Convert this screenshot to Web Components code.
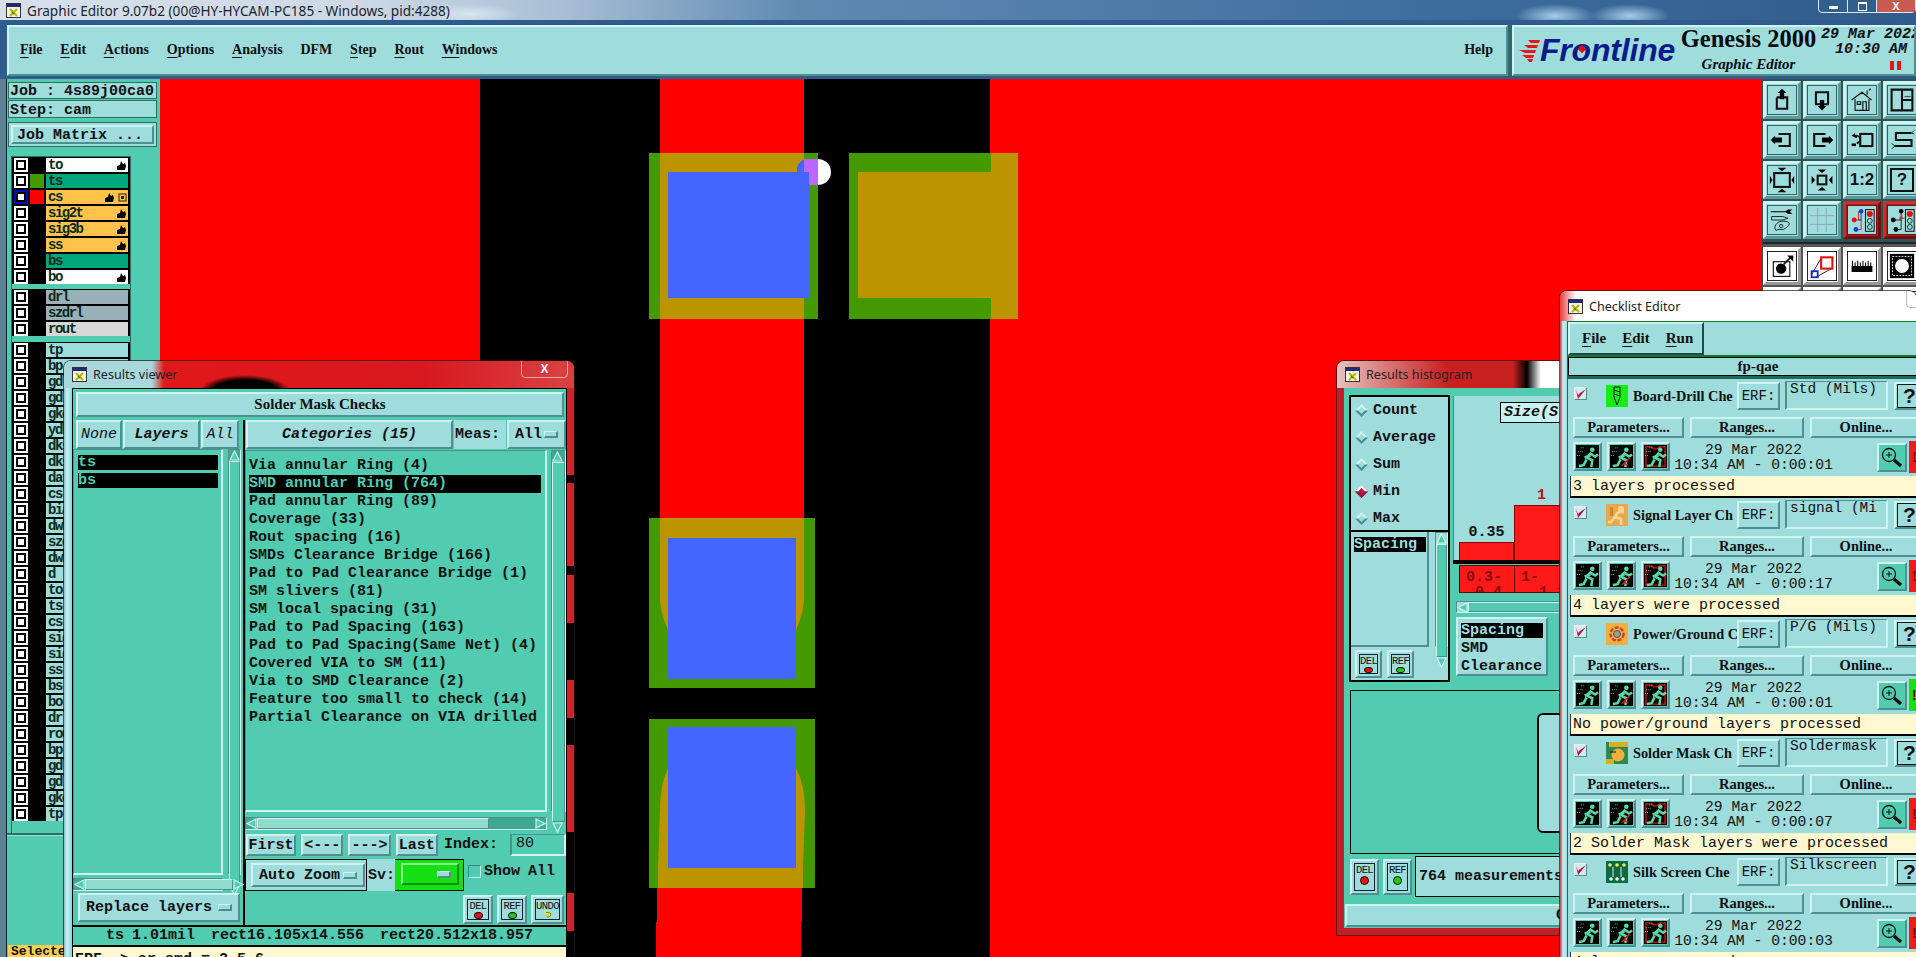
<!DOCTYPE html>
<html>
<head>
<meta charset="utf-8">
<title>Graphic Editor</title>
<style>
  html, body { margin: 0; background: #000; overflow: hidden; }
</style>
</head>
<body>
<ge-app></ge-app>
<script>
const CYAN = '#9fdcdc', TEAL = '#52ccb0';
const MONO = '"Liberation Mono", monospace', SERIF = '"Liberation Serif", serif';
const RAISED = 'border:2px solid;border-color:#cff3f3 #4f8f8f #4f8f8f #cff3f3;';
const SUNKEN = 'border:2px solid;border-color:#4f8f8f #cff3f3 #cff3f3 #4f8f8f;';

function define(name, css, render) {
  customElements.define(name, class extends HTMLElement {
    constructor() {
      super();
      this.attachShadow({ mode: 'open' });
    }
    connectedCallback() {
      if (this._done) return;
      this._done = true;
      const a = (k, d = '') => this.hasAttribute(k) ? this.getAttribute(k) : d;
      this.shadowRoot.innerHTML = `<style>${css}</style>${render(a)}`;
    }
  });
}

define('m-btn', `
  :host { display:flex; align-items:center; justify-content:center; box-sizing:border-box; background:${CYAN};
    ${RAISED} font:bold 15px ${MONO}; color:#111; white-space:nowrap; overflow:hidden; }
`, () => `<slot></slot>`);

define('m-drop', `
  :host { display:flex; align-items:center; box-sizing:border-box; background:${CYAN}; ${RAISED}
    font:bold 15px ${MONO}; color:#111; padding:0 6px 0 6px; white-space:pre; }
  span { flex:1; }
  i { width:11px; height:4px; background:${CYAN}; ${RAISED} border-width:1px 2px 2px 1px; }
`, () => `<span><slot></slot></span><i></i>`);

define('scroll-bar', `
  :host { display:flex; box-sizing:border-box; background:#3fa893; ${SUNKEN} border-width:1px; }
  :host([dir=v]) { flex-direction:column; }
  svg { flex:none; width:11px; height:11px; display:block; }
  b { display:block; background:${TEAL}; ${RAISED} border-width:1px; box-sizing:border-box; }
  :host([light]) b { background:#8fdccc; }
  u { flex:1; }
`, a => {
  const v = a('dir') === 'v';
  const s = v ? 'flex:none;height:' + a('thumb', '100%') : 'flex:none;width:' + a('thumb', '100%');
  const first = v ? 'M5.5 1L10 10H1z' : 'M1 5.5L10 1V10z';
  const last = v ? 'M5.5 10L10 1H1z' : 'M10 5.5L1 1V10z';
  const arrow = d => `<svg viewBox="0 0 11 11"><path d="${d}" fill="${TEAL}" stroke="#c8f4ec" stroke-width="1.2"/></svg>`;
  return `${arrow(first)}<b style="${s}"></b><u></u>${arrow(last)}`;
});

// small DEL / REF / UNDO button with the dot under the word
define('dot-btn', `
  :host { display:flex; box-sizing:border-box; background:${CYAN}; ${RAISED} padding:2px; }
  div { flex:1; border:1px solid #123; display:flex; flex-direction:column; align-items:center; font:10.5px/10px ${MONO};
    letter-spacing:-.6px; color:#111; padding-top:1px; }
  i { width:7px; height:7px; border-radius:50%; border:1px solid #111; margin-top:1px; }
  svg { width:12px; height:11px; }
`, a => `<div>${a('label')}${a('color') ? `<i style="background:${a('color')}"></i>` :
  `<svg viewBox="0 0 12 11"><path d="M3 2h4a3 3 0 0 1 0 6H4M4 0L1 2l3 2" fill="none" stroke="#ee0" stroke-width="2"/><path d="M3 2h4a3 3 0 0 1 0 6H4" fill="none" stroke="#111" stroke-width=".6"/></svg>`}</div>`);

define('win-icon', `
  :host { display:block; flex:none; width:15px; height:15px; }
  svg { display:block; width:15px; height:15px; }
`, () => `<svg viewBox="0 0 15 15"><rect x=".5" y=".5" width="14" height="14" fill="#f4f4e8" stroke="#333"/><rect x="1" y="1" width="13" height="3" fill="#1c2a78"/>
  <path d="M4 6l7 7M11 6l-7 7" stroke="#b8b800" stroke-width="2.2"/><path d="M6 9l2 2" stroke="#2a8a2a" stroke-width="1.5"/></svg>`);

// desktop window with a glass title bar
define('ge-window', `
  :host { position:absolute; display:flex; flex-direction:column; box-sizing:border-box; overflow:hidden;
    border-radius:7px 7px 0 0; box-shadow:0 0 0 1px rgba(40,20,20,.7); }
  .bar { flex:none; display:flex; align-items:center; gap:6px; padding-left:8px; font:12.6px "Noto Sans", sans-serif; color:#222; position:relative; }
  .x { position:absolute; top:-1px; height:18px; border:1px solid rgba(255,255,255,.55); border-radius:0 0 4px 4px; display:flex; align-items:center; justify-content:center;
    font:bold 12px "Liberation Sans", sans-serif; color:#fff; box-sizing:border-box; }
  .body { flex:1; min-height:0; display:flex; overflow:hidden; }
`, a => `<div class="bar" style="height:${a('bar', '27')}px;background:${a('glass', '#d02020')}"><win-icon></win-icon><span>${a('name')}</span>${a('x') ? `<div class="x" style="${a('x')}">${a('xt')}</div>` : ''}</div>
  <div class="body"><slot></slot></div>`);

define('ge-title', `
  :host { display:flex; align-items:center; height:20px; flex:none; position:relative; padding-left:6px; gap:6px;
    font:13.6px "Noto Sans", sans-serif; color:#1c2430; overflow:hidden;
    background:
      radial-gradient(ellipse 40px 12px at 1555px 16px, #a8cdea, transparent),
      radial-gradient(ellipse 40px 12px at 1630px 16px, #a8cdea, transparent),
      radial-gradient(ellipse 50px 10px at 470px 14px, #d8e6f2, transparent),
      linear-gradient(90deg, #d7e0ea 0, #cdd9e6 360px, #a9bfd5 560px, #5f8ab2 800px, #3f6f9f 1400px, #2f5c8a 1916px); }
  .ctl { position:absolute; right:0; top:-1px; display:flex; height:12px; border:1px solid #dfe8f0; border-radius:0 0 4px 4px; }
  .ctl i { display:flex; align-items:center; justify-content:center; width:28px; border-right:1px solid #dfe8f0; }
  .ctl i:first-child s { width:9px; height:3px; background:#fff; margin-top:3px; }
  .ctl i:nth-child(2) s { width:7px; height:6px; border:1px solid #fff; border-top-width:2px; }
  .ctl i:last-child { width:38px; background:#c85a50; border:0; font:normal bold 11px "Liberation Sans", sans-serif; color:#fff; }
`, () => `<win-icon></win-icon><span>Graphic Editor 9.07b2 (00@HY-HYCAM-PC185 - Windows, pid:4288)</span>
  <div class="ctl"><i><s></s></i><i><s></s></i><i>X</i></div>`);

define('ge-menubar', `
  :host { display:flex; height:51px; flex:none; margin:5px 0 3px 7px; background:#2f6a6a; gap:4px; }
  .menu, .brand { background:${CYAN}; ${RAISED} box-sizing:border-box; height:51px; }
  .menu { flex:1; display:flex; align-items:center; padding:0 0 2px 11px; gap:17.8px; font:bold 14px ${SERIF}; color:#111; }
  .menu u { text-underline-offset:3px; }
  .help { margin-left:auto; margin-right:13px; }
  .brand { width:404px; display:flex; position:relative; overflow:hidden; white-space:nowrap; }
  .logo { flex:none; display:flex; align-items:center; width:166px; padding:0 0 2px 3px; box-sizing:border-box; }
  .logo svg { width:23px; height:24px; flex:none; }
  .logo span { font:italic bold 32px/1 "Liberation Sans", sans-serif; color:#0b1b8c; letter-spacing:-.2px; }
  .logo em { position:relative; font-style:inherit; }
  .logo em::after { content:""; position:absolute; left:7px; top:14px; width:6px; height:6px; background:#e01010; transform:rotate(45deg); }
  .gen { width:137px; flex:none; display:flex; flex-direction:column; align-items:center; color:#0a0a0a; }
  .gen b { font:bold 24.5px/1 ${SERIF}; }
  .gen i { font:italic bold 15px/1 ${SERIF}; margin-top:5px; }
  .when { flex:none; margin-left:4px; font:italic bold 15px/15px ${MONO}; color:#111; white-space:pre; }
  .when p { margin:0; }
  .when p + p { padding-left:14px; }
  .pause { display:flex; gap:3px; margin:4px 0 0 69px; }
  .pause s { width:4px; height:9px; background:#e01818; }
`, () => `<div class="menu"><span><u>F</u>ile</span><span><u>E</u>dit</span><span><u>A</u>ctions</span><span><u>O</u>ptions</span><span><u>A</u>nalysis</span><span>DFM</span><span><u>S</u>tep</span><span><u>R</u>out</span><span><u>Wi</u>ndows</span><span class="help">Help</span></div>
  <div class="brand">
    <div class="logo"><svg viewBox="0 0 23 24"><path d="M11 2h12l-1 3H14zM7 7h14l-1 3H11zM2 12h17l-1 3H8zM5 17h12l-1 3H9zM10 21h6l-1 3h-3z" fill="#e81818"/></svg><span>Fr<em>o</em>ntline</span></div>
    <div class="gen"><b>Genesis 2000</b><i>Graphic Editor</i></div>
    <div class="when"><p>29 Mar 2022</p><p>10:30 AM</p><div class="pause"><s></s><s></s></div></div>
  </div>`);

define('layer-row', `
  :host { display:flex; height:14px; margin-bottom:2px; align-items:stretch; }
  .ck { width:14px; box-sizing:border-box; border:2px solid #fff; background:#000; display:flex; align-items:center; justify-content:center; }
  .ck i { width:6px; height:6px; background:#fff; }
  :host([active]) .ck { border-color:#0010c0; }
  .sw { width:14px; margin:0 2px; }
  .nm { flex:1; padding-left:2px; font:bold 14px/15px ${MONO}; letter-spacing:-1.5px; color:#0a2a20; position:relative; overflow:hidden; }
  .nm svg { position:absolute; right:2px; top:3px; width:9px; height:9px; }
  .nm svg + svg { right:14px; }
`, a => {
  const hand = `<svg viewBox="0 0 9 9"><path d="M0 9V5l3-1 1-4 2 3 2-1 1 3-1 4z"/></svg>`;
  const mark = `<svg viewBox="0 0 9 9" style="right:1px"><rect x="1" y="1" width="7" height="7" fill="none" stroke="#222"/><path d="M3 3h3v3H3z" fill="#222"/></svg>`;
  return `<div class="ck"><i></i></div><div class="sw" style="background:${a('sw', '#000')}"></div>
    <div class="nm" style="background:${a('bg', CYAN)}">${a('n')}${a('mark') ? mark + hand : a('hand') ? hand : ''}</div>`;
});

define('ge-left', `
  :host { display:flex; flex-direction:column; flex:none; width:153px; margin-left:7px; background:${TEAL}; position:relative;
    box-shadow:-1px 0 0 #123, -7px 0 0 #5f7f92; }
  .info { background:${CYAN}; border:1px solid #2a6f5f; margin:3px 3px 0 1px; height:17px; box-sizing:border-box; font:bold 15px/17px ${MONO}; color:#111; padding-left:1px; white-space:pre; }
  .info + .info { margin-top:1px; height:18px; line-height:19px; }
  .mx { margin:4px 3px 0 1px; padding:2px; border:1px solid #2a6f5f; background:${CYAN}; height:25px; box-sizing:border-box; display:flex; }
  .mx m-btn { flex:1; justify-content:flex-start; padding:1px 0 0 4px; }
  .list { margin:9px 0 0 4px; width:120px; box-sizing:border-box; height:677px; border:1px solid #2a6f5f; border-bottom:0; flex:none; }
  .grp { background:#000; padding:1px 2px 0; }
  .grp + .grp { margin-top:5px; }
  .grp.low { margin-top:6px; }
  .rule { height:2px; flex:none; background:#2a6f5f; box-shadow:0 1px 0 #8fe8d4; }
  .sel { margin:auto 0 0 1px; height:12px; background:#ffd050; font:bold 13px/14px ${MONO}; padding-left:3px; overflow:hidden; color:#111; white-space:pre; }
`, () => {
  const row = (n, bg, sw, extra = '') => `<layer-row n="${n}" bg="${bg}" ${sw ? `sw="${sw}"` : ''} ${extra}></layer-row>`;
  const W = '#fff', G = '#00a67c', O = '#ffc24a';
  const low = 'tp bp gdl gdl gkd ydk dks dks dat csl bia dwk szd dwk d to. ts. cs. sig sig ss. bs. bo. drl rou bp. gdl gdl gkd tp.'.split(' ');
  return `<div class="info">Job : 4s89j00ca0</div><div class="info">Step: cam</div>
    <div class="mx"><m-btn>Job Matrix ...</m-btn></div>
    <div class="list">
      <div class="grp">${row('to', W, '', 'hand=1')}${row('ts', G, '#449900')}${row('cs', O, '#ff0000', 'hand=1 mark=1 active')}${row('sig2t', O, '', 'hand=1')}${row('sig3b', O, '', 'hand=1')}${row('ss', O, '', 'hand=1')}${row('bs', G)}${row('bo', W, '', 'hand=1')}</div>
      <div class="grp">${row('drl', '#9ab0b8')}${row('szdrl', '#9ab0b8')}${row('rout', '#d8d8d8')}</div>
      <div class="grp low">${low.map(n => row(n, CYAN)).join('')}</div>
    </div>
    <div class="rule"></div>
    <div class="sel">Selected</div>`;
});

// the board itself: red copper, green mask openings, blue pads
define('pcb-canvas', `
  :host { display:block; flex:1; min-width:0; background:#000; }
  svg { display:block; width:100%; height:100%; }
`, () => {
  const R = '#ff0000', G = '#449900', Y = '#bb9500', B = '#4466ff';
  return `<svg viewBox="160 79 1602 878" shape-rendering="crispEdges">
    <rect x="160" y="79" width="320" height="878" fill="${R}"/>
    <rect x="990" y="79" width="772" height="878" fill="${R}"/>
    <rect x="660" y="79" width="144" height="470" fill="${R}"/>
    <path d="M657 888H802L801 957H656z" fill="${R}"/>
    <rect x="649" y="153" width="169" height="166" fill="${G}"/>
    <rect x="660" y="153" width="144" height="166" fill="${Y}"/>
    <rect x="668" y="172" width="141" height="126" fill="${B}"/>
    <path d="M804 172V159.2A15 13 0 0 0 797 172z" fill="${B}"/>
    <path d="M804 159H818V185H809V172H804z" fill="#bb66ff"/>
    <path d="M818 159A13 13 0 0 1 818 185z" fill="#fff" shape-rendering="auto"/>
    <rect x="849" y="153" width="142" height="166" fill="${G}"/>
    <rect x="858" y="172" width="133" height="126" fill="${Y}"/>
    <rect x="991" y="153" width="27" height="166" fill="${Y}"/>
    <rect x="649" y="518" width="166" height="170" fill="${G}"/>
    <path d="M660 518H804V598Q804 612 796 630V538H668V630Q660 612 660 598z" fill="${Y}" shape-rendering="auto"/>
    <rect x="668" y="538" width="128" height="141" fill="${B}"/>
    <rect x="649" y="719" width="166" height="169" fill="${G}"/>
    <path d="M668 768Q660 785 660 810L658 868V888H803V868L805 810Q805 785 796 768V868H668z" fill="${Y}" shape-rendering="auto"/>
    <rect x="668" y="727" width="128" height="141" fill="${B}"/>
    <rect x="658" y="868" width="145" height="20" fill="${Y}"/>
  </svg>`;
});

const S = 'fill="none" stroke="#111" stroke-width="2.4"';
let teeth = 'M3 22V15';
for (let x = 3; x < 27; x += 3) teeth += `h.5v${x % 6 == 3 ? -6 : -4}h1.2v${x % 6 == 3 ? 6 : 4}h1.3`;
teeth += 'V22z';
const TOOL = {
  up: `<path d="M9 12h4M17 12h4v13H9V12" ${S}/><path d="M15 2l5 5h-2.5v7h-5V7H10z"/>`,
  down: `<path d="M13 20H8V6h14v14h-5" ${S}/><path d="M15 27l-5-5h2.500v-7h5v7H20z"/>`,
  house: `<g fill="none" stroke="#111" stroke-width="1.3"><path d="M3 15L15 6l11 9M7 14v13h16V14M9.500 17h4v3h-4zM16 27v-10h4v10M21 9V4M23 4l2-2"/></g>`,
  panes: `<path d="M3 3h24v24H3zM15 3v24M15 15h12" ${S}/><path d="M18 11h7" stroke="#555" stroke-width="1.500"/>`,
  left: `<path d="M11 8h13v14H11" ${S}/><path d="M2 15l5-5v2h8v6H7v2z"/>`,
  right: `<path d="M19 8H6v14h13" ${S}/><path d="M28 15l-5-5v2h-8v6h8v2z"/>`,
  undo: `<rect x="13" y="8" width="14" height="14" ${S}/><path d="M3 10l4-3v2a5 5 0 0 1 2 11v-3a2 2 0 0 0 0-6v2z"/><path d="M3 19h5v3H3z"/>`,
  route: `<path d="M26 7H8v8h18v7H7" ${S}/><path d="M26 7l3-3M26 7l3 1M7 22l-4-3M7 22l-4 3" stroke="#111" fill="none"/>`,
  expand: `<rect x="6" y="7" width="18" height="16" ${S}/><path d="M15 5l-5-4h10zM15 25l-5 4h10zM4 15l-3-5v10zM26 15l3-5v10z"/>`,
  shrink: `<rect x="10" y="10" width="10" height="10" ${S}/><path d="M15 7l-5-4h10zM15 23l-5 4h10zM7 15l-4-5v10zM23 15l4-5v10z"/>`,
  tools: `<path d="M2 5h17l3-2h5l-3 2.500 3 2.500h-5l-3-2H2z"/><path d="M3 11h13l6 2-6 2H3z" fill="none" stroke="#111"/><path d="M8 27q-3-4 1-8t12-2q5 2 0 6t-7 3-6 1z" fill="none" stroke="#111"/><circle cx="14" cy="22" r="2" fill="none" stroke="#111"/>`,
  grid: `<path d="M1 10h28M1 20h28M10 1v28M20 1v28" stroke="#8fa3b8" stroke-width="1"/>`,
  ruler: `<path d="${teeth}"/>`,
  pad: `<rect x="1" y="1" width="28" height="28"/><rect x="4" y="4" width="22" height="22" fill="none" stroke="#fff" stroke-width="1" stroke-dasharray="2 1.500"/><circle cx="15" cy="15" r="8" fill="#fff"/>`,
  drill: `<rect x="5" y="10" width="19" height="17" fill="none" stroke="#111" stroke-width="1.300"/><circle cx="14" cy="18" r="6"/><path d="M17 13L25 5" stroke="#111" stroke-width="2"/><path d="M21 3h7v7z"/>`,
  frame: `<path d="M3 25L14 6" stroke="#111" fill="none"/><path d="M8 28L26 18" stroke="#111" fill="none"/><rect x="14" y="5" width="13" height="13" fill="none" stroke="#e01010" stroke-width="2.400"/><rect x="3" y="21" width="7" height="7" fill="none" stroke="#1020d0" stroke-width="2"/>`,
  light1: `<path d="M5 15h9V26H8M11 5v10" fill="none" stroke="#e01010"/><path d="M14 5v10h-3" fill="none" stroke="#1040e0" stroke-width="1.200"/><circle cx="14" cy="5" r="2.600" fill="#1040e0"/><circle cx="6" cy="15" r="2.800" fill="#e01010"/><circle cx="8" cy="26" r="2.800" fill="#1040e0"/><rect x="19" y="3" width="10" height="25" fill="none" stroke="#111" stroke-width="1.200"/><circle cx="24" cy="8" r="3.500" fill="#e01010"/><circle cx="24" cy="16" r="2.800" fill="none" stroke="#111"/><circle cx="24" cy="23" r="2.800" fill="none" stroke="#111"/>`,
  light2: `<path d="M5 15h9M14 5v10M14 15v11H8" fill="none" stroke="#111"/><path d="M12 13h6M13 11v3M15 11v3" stroke="#e01010"/><circle cx="14" cy="5" r="2.600"/><circle cx="5" cy="15" r="2.800"/><circle cx="8" cy="26" r="2.800"/><rect x="19" y="3" width="10" height="25" fill="none" stroke="#111" stroke-width="1.200"/><circle cx="24" cy="8" r="3.500" fill="#e01010"/><circle cx="24" cy="16" r="2.800" fill="none" stroke="#111"/><circle cx="24" cy="23" r="2.800" fill="none" stroke="#111"/>`
};

define('tool-btn', `
  :host { display:flex; box-sizing:border-box; width:38px; height:38px; padding:1px; background:${CYAN}; border:3px solid; border-color:#cff3f3 #5f9a9a #5f9a9a #cff3f3; }
  div { flex:1; display:flex; align-items:center; justify-content:center; border:1px solid #2f6666; font:bold 17px "Liberation Sans", sans-serif; color:#111; overflow:hidden; }
  svg { width:26px; height:26px; flex:none; }
  :host([kind=hot]) { background:#a82020; border-color:#c83030 #701010 #701010 #c83030; }
  :host([kind=hot]) div { background:${CYAN}; border-color:#701010; }
  :host([kind=white]) { background:#fff; border-color:#fff #999 #999 #fff; }
  :host([kind=white]) div { background:#fff; border-color:#222; }
`, a => `<div>${a('i') ? `<svg viewBox="0 0 30 30">${TOOL[a('i')]}</svg>` : ''}<slot></slot></div>`);

define('ge-toolbar', `
  :host { display:block; flex:none; width:154px; background:#2c5654; padding:2px 0 0 1px; box-sizing:border-box; overflow:hidden; }
  .g { display:grid; grid-template-columns:repeat(4, 38px); gap:2px; }
  .w { margin-top:3px; border-top:2px solid #223; background:#555; padding:3px 0 0; }
  .q { border:2.500px solid #111; padding:1px 5px; font-size:17px; line-height:18px; }
`, () => {
  const names = ['up', 'down', 'house', 'panes', 'left', 'right', 'undo', 'route', 'expand', 'shrink'];
  return `<div class="g">${names.map(n => `<tool-btn i="${n}"></tool-btn>`).join('')}
      <tool-btn>1:2</tool-btn><tool-btn><span class="q">?</span></tool-btn>
      <tool-btn i="tools"></tool-btn><tool-btn i="grid"></tool-btn><tool-btn i="light1" kind="hot"></tool-btn><tool-btn i="light2" kind="hot"></tool-btn></div>
    <div class="g w"><tool-btn i="drill" kind="white"></tool-btn><tool-btn i="frame" kind="white"></tool-btn><tool-btn i="ruler" kind="white"></tool-btn><tool-btn i="pad" kind="white"></tool-btn>
      <tool-btn kind="white"></tool-btn><tool-btn kind="white"></tool-btn><tool-btn kind="white"></tool-btn><tool-btn kind="white"></tool-btn></div>`;
});

define('results-viewer', `
  :host { display:flex; flex-direction:column; flex:1; min-width:0; box-sizing:border-box; margin:0 7px 0 8px; background:#000; padding:1px 1px 0; color:#111; }
  .t { background:${TEAL}; flex:none; }
  .head { display:flex; padding:3px 2px 3px 3px; height:25px; }
  .head m-btn { flex:1; font:bold 15px ${SERIF}; }
  .main { display:flex; height:505px; }
  .lc { width:170px; flex:none; display:flex; flex-direction:column; background:${TEAL}; }
  .rc { flex:1; min-width:0; display:flex; flex-direction:column; background:${TEAL}; margin-left:2px; }
  .top { display:flex; height:29px; flex:none; box-sizing:border-box; gap:1px; align-items:stretch; }
  .top m-btn { font-style:italic; }
  .meas { background:${CYAN}; width:52px; font:bold 15px/29px ${MONO}; padding-left:1px; box-sizing:border-box; }
  .ll { display:flex; height:426px; flex:none; }
  .list { ${SUNKEN} border-width:1px 2px 2px 1px; box-sizing:border-box; font:bold 15px/18px ${MONO}; white-space:pre; padding:5px 3px 0 4px; background:${TEAL}; overflow:hidden; }
  .list div { height:18px; }
  .on { background:#000; color:${TEAL}; }
  .list.l .on { height:15px; margin-bottom:3px; line-height:15px; }
  .rr { display:flex; height:362px; flex:none; margin-top:1px; }
  .nav { display:flex; height:22px; margin-top:4px; align-items:stretch; gap:5px; font:bold 15px/22px ${MONO}; white-space:pre; flex:none; }
  .nav m-btn { width:44px; }
  .nav m-btn:first-child { width:52px; margin-left:1px; }
  .idx { width:58px; margin-left:7px; box-sizing:border-box; ${SUNKEN} border-width:1px 2px 2px 2px; font:15px/17px ${MONO}; padding-left:4px; }
  .auto { display:flex; height:32px; margin-top:3px; flex:none; align-items:stretch; font:bold 15px ${MONO}; white-space:pre; }
  .azb { background:${CYAN}; border:1px solid #000; box-sizing:border-box; width:122px; padding:3px 1px 3px 5px; display:flex; }
  .azb m-drop { flex:1; }
  .sv { background:${CYAN}; width:28px; display:flex; align-items:center; padding-left:1px; box-sizing:border-box; }
  .gr { width:69px; background:#14e014; padding:3px 4px 5px 6px; box-sizing:border-box; border:1px solid #000; border-left:0; display:flex; }
  .gr m-drop { flex:1; background:#14e014; border-color:#8ff08f #0a900a #0a900a #8ff08f; }
  .show { display:flex; align-items:center; gap:3px; margin-left:4px; height:24px; word-spacing:-1px; }
  .show i { width:11px; height:11px; border:1px solid; border-color:#2f8f7f #bff0e8 #bff0e8 #2f8f7f; }
  .del { display:flex; justify-content:flex-end; gap:4px; padding:4px 2px 0 0; }
  .del dot-btn { width:30px; height:29px; }
  .del dot-btn:last-child { width:33px; }
  .st { height:18px; margin-top:2px; font:bold 15px/18px ${MONO}; text-align:center; white-space:pre; word-spacing:-1px; flex:none; }
  .log { flex:1; margin-top:2px; background:#fff8d0; font:bold 15px/20px ${MONO}; padding:3px 0 0 2px; white-space:pre; overflow:hidden; }
`, () => {
  const cats = ['Via annular Ring (4)', 'SMD annular Ring (764)', 'Pad annular Ring (89)', 'Coverage (33)', 'Rout spacing (16)', 'SMDs Clearance Bridge (166)', 'Pad to Pad Clearance Bridge (1)', 'SM slivers (81)', 'SM local spacing (31)', 'Pad to Pad Spacing (163)', 'Pad to Pad Spacing(Same Net) (4)', 'Covered VIA to SM (11)', 'Via to SMD Clearance (2)', 'Feature too small to check (14)', 'Partial Clearance on VIA drilled'];
  return `<div class="t head"><m-btn>Solder Mask Checks</m-btn></div>
  <div class="main">
    <div class="lc">
      <div class="top" style="padding-left:3px"><m-btn style="width:46px;font-weight:400">None</m-btn><m-btn style="width:77px;background:${CYAN}">Layers</m-btn><m-btn style="width:38px;font-weight:400">All</m-btn></div>
      <div class="ll"><div class="list l" style="width:150px"><div class="on">ts</div><div class="on">bs</div></div><scroll-bar dir="v" style="width:13px;margin-left:5px"></scroll-bar></div>
      <scroll-bar style="width:150px;height:13px;margin-top:3px" light></scroll-bar>
      <div style="padding:2px 3px 3px 5px;flex:1;display:flex"><m-drop style="flex:1">Replace layers</m-drop></div>
    </div>
    <div class="rc">
      <div class="top"><m-btn style="width:207px;margin-left:1px;font-style:italic">Categories (15)</m-btn><div class="meas">Meas:</div><m-drop style="flex:1">All</m-drop></div>
      <div class="rr"><div class="list" style="width:302px;padding:6px 4px 0 3px">${cats.map((c, i) => `<div class="${i == 1 ? 'on' : ''}">${c}</div>`).join('')}</div><scroll-bar dir="v" style="width:15px;margin-left:4px"></scroll-bar></div>
      <scroll-bar style="width:302px;height:13px;margin-top:5px" thumb="232px" light></scroll-bar>
      <div class="nav"><m-btn>First</m-btn><m-btn>&lt;---</m-btn><m-btn>---&gt;</m-btn><m-btn>Last</m-btn><span style="margin-left:1px">Index:</span><div class="idx">80</div></div>
      <div class="auto"><div class="azb"><m-drop>Auto Zoom</m-drop></div><div class="sv">Sv:</div><div class="gr"><m-drop></m-drop></div><div class="show"><i></i>Show All</div></div>
      <div class="del"><dot-btn label="DEL" color="#e81010"></dot-btn><dot-btn label="REF" color="#14d014"></dot-btn><dot-btn label="UNDO"></dot-btn></div>
    </div>
  </div>
  <div class="t st">ts 1.01mil  rect16.105x14.556  rect20.512x18.957</div>
  <div class="log">ERF -&gt; ar_smd = 2 5 6</div>`;
});

define('results-histogram', `
  :host { display:flex; flex-direction:column; flex:1; min-width:0; box-sizing:border-box; margin:0 0 7px 7px; background:${TEAL}; color:#111; font:bold 15px ${MONO}; }
  .top { display:flex; height:296px; padding:7px 0 0 5px; box-sizing:border-box; flex:none; }
  .lb { width:101px; height:287px; flex:none; box-sizing:border-box; border:2px solid #000; background:${CYAN}; display:flex; flex-direction:column; }
  .radios { height:135px; box-sizing:border-box; padding:0 0 0 4px; border-bottom:2px solid #000; display:flex; flex-direction:column; flex:none; }
  .radios div { display:flex; align-items:center; gap:5px; height:27px; flex:none; }
  .radios svg { width:13px; height:13px; flex:none; }
  .ls { display:flex; height:115px; flex:none; }
  .lst { width:79px; box-sizing:border-box; padding:5px 0 0 3px; ${RAISED} border-width:0 2px 2px 0; white-space:pre; overflow:hidden; }
  .lst b { display:block; background:#000; color:${CYAN}; width:72px; height:15px; line-height:15px; font-weight:bold; }
  .bt { display:flex; gap:5px; padding:3px 0 0 4px; }
  .bt dot-btn { width:27px; height:28px; }
  .rb { margin-left:3px; width:200px; flex:none; display:flex; flex-direction:column; }
  .chart { height:164px; margin-top:1px; background:${CYAN}; flex:none; display:flex; flex-direction:column; border-left:1px solid #3c8c8c; box-sizing:border-box; }
  .sz { margin:6px 0 0 46px; width:110px; height:21px; background:#c8f2f4; border:1px solid #000; font:italic bold 15px/20px ${MONO}; box-sizing:border-box; padding-left:3px; white-space:pre; flex:none; }
  .bars { flex:1; display:flex; align-items:flex-end; padding-left:5px; }
  .col { display:flex; flex-direction:column; align-items:center; width:55px; }
  .col b { background:#ff1a1a; width:100%; box-sizing:border-box; border:1px solid #800; border-bottom:0; }
  .col span { font:bold 15px/18px ${MONO}; }
  .base { height:4px; background:#000; flex:none; }
  .tb { display:flex; height:28px; margin:1px 0 0 6px; flex:none; }
  .tb div { width:55px; flex:none; box-sizing:border-box; background:#ff1a1a; border:1px solid #600; border-right:0; color:#8a0a0a; font:bold 15px/15px ${MONO}; overflow:hidden; white-space:pre; padding:4px 0 0 6px; }
  .lst2 { margin:4px 0 0 3px; height:59px; width:92px; box-sizing:border-box; padding:4px 0 0 3px; ${RAISED} border-width:2px; background:${CYAN}; white-space:pre; line-height:18px; overflow:hidden; }
  .lst2 b { display:block; background:#000; color:${CYAN}; width:82px; height:15px; line-height:15px; margin-bottom:2px; }
  .low { margin:6px 0 0 6px; height:164px; background:${TEAL}; border:1px solid #000; box-sizing:border-box; padding:22px 0 0 186px; flex:none; border-right:0; }
  .low div { width:60px; height:120px; background:${CYAN}; border:2px solid #000; border-radius:6px; box-sizing:border-box; }
  .btm { display:flex; margin:2px 0 0 6px; height:41px; gap:4px; flex:none; }
  .btm dot-btn { width:29px; height:36px; margin-top:3px; }
  .msg { flex:1; background:${CYAN}; border:1px solid #000; box-sizing:border-box; margin-left:-1px; padding-left:3px; line-height:40px; white-space:pre; overflow:hidden; }
  .end { margin:7px 0 0 1px; height:23px; ${RAISED} background:${CYAN}; box-sizing:border-box; padding-left:209px; line-height:19px; flex:none; font-weight:bold; overflow:hidden; }
`, () => {
  const dia = on => `<svg viewBox="0 0 13 13"><path d="M6.500 0L13 6.500 6.500 13 0 6.500z" fill="${on ? '#c8104a' : CYAN}"/><path d="M6.500 0L13 6.500H10L6.500 3 3 6.500H0z" fill="${on ? '#fff' : '#cff3f3'}"/><path d="M0 6.500L6.500 13 13 6.500H10L6.500 10 3 6.500z" fill="${on ? '#802040' : '#4f8f8f'}"/></svg>`;
  const r = (t, on) => `<div>${dia(on)}${t}</div>`;
  return `<div class="top">
    <div class="lb">
      <div class="radios">${r('Count')}${r('Average')}${r('Sum')}${r('Min', 1)}${r('Max')}</div>
      <div class="ls"><div class="lst"><b>Spacing</b></div><scroll-bar dir="v" style="width:13px;margin-left:6px;background:${CYAN}"></scroll-bar></div>
      <div class="bt"><dot-btn label="DEL" color="#e81010"></dot-btn><dot-btn label="REF" color="#14d014"></dot-btn></div>
    </div>
    <div class="rb">
      <div class="chart"><div class="sz">Size(S</div>
        <div class="bars"><div class="col"><span>0.35</span><b style="height:18px"></b></div><div class="col"><span style="color:#c01010">1</span><b style="height:55px"></b></div></div></div>
      <div class="base"></div>
      <div class="tb"><div>0.3-
 0.4</div><div>1-
  1.1</div></div>
      <scroll-bar style="width:170px;height:12px;margin:8px 0 0 3px;background:${CYAN}" thumb="150px"></scroll-bar>
      <div class="lst2"><b>Spacing</b>SMD
Clearance</div>
    </div>
  </div>
  <div class="low"><div></div></div>
  <div class="btm"><dot-btn label="DEL" color="#e81010"></dot-btn><dot-btn label="REF" color="#14d014"></dot-btn><div class="msg">764 measurements</div></div>
  <div class="end">C</div>`;
});

const RUN = `<circle cx="17" cy="5" r="2.400" fill="#58d8a8"/><path d="M16 8l-5 5 6 3-1 7M15 11l-6 2M15 9l5 3 3-2M11 15l-3 6-5 1" fill="none" stroke="#58d8a8" stroke-width="2.600"/><path d="M2 7h5M1 11h4M5 3h3" stroke="#58d8a8" stroke-dasharray="1 1"/>`;
const BADGE = {
  drill: `<rect width="22" height="22" fill="#14f014"/><path d="M8 2h6v10l-3 8-3-8z" fill="#14f014" stroke="#111"/><path d="M8 5l6 2M8 9l6 2" stroke="#111"/>`,
  signal: `<rect width="22" height="22" fill="#e8a850"/><circle cx="15" cy="5" r="3" fill="#f8d890"/><path d="M12 8l-3 5 6 2v6M9 13l-4 5H2M12 8h6" stroke="#f8d890" stroke-width="2.600" fill="none"/><rect x="4" y="3" width="3" height="9" fill="#c88838"/>`,
  power: `<rect width="22" height="22" fill="#f0b040"/><circle cx="11" cy="11" r="6.500" fill="none" stroke="#d04030" stroke-width="2.400" stroke-dasharray="4 1.500"/><circle cx="11" cy="11" r="3.500" fill="#9a9a9a" stroke="#555"/>`,
  mask: `<rect width="22" height="22" fill="#2a8a50"/><rect x="3" width="19" height="5" fill="#d8b020"/><rect y="17" width="8" height="5" fill="#d8b020"/><circle cx="12" cy="13" r="6.500" fill="#f0b040"/><path d="M4 10h6" stroke="#111"/>`,
  silk: `<rect width="22" height="22" fill="#0a6a40"/><g fill="#f0e860"><circle cx="4" cy="4" r="1.800"/><circle cx="11" cy="4" r="1.800"/><circle cx="18" cy="4" r="1.800"/></g><g fill="#f4f4f4"><circle cx="5" cy="18" r="1.800"/><circle cx="11" cy="18" r="1.800"/><circle cx="17" cy="18" r="1.800"/></g><path d="M7 6v10M15 6v10" stroke="#e8e8e8"/>`
};

define('check-item', `
  :host { display:flex; flex-direction:column; height:119px; flex:none; width:356px; background:${CYAN}; box-sizing:border-box; padding-left:5px; font:15px ${MONO}; color:#111; overflow:hidden; }
  .a { display:flex; height:28px; margin-top:3px; align-items:stretch; flex:none; }
  .ck { width:13px; height:13px; margin:5px 0 0 1px; background:#cfeeee; border:1px solid; border-color:#eef #4f8f8f #4f8f8f #eef; box-sizing:border-box; flex:none; }
  .ck svg { display:block; width:11px; height:11px; }
  .bd { width:22px; height:22px; margin:3px 0 0 19px; flex:none; }
  .nm { width:100px; margin-left:5px; flex:none; font:bold 14.3px/28px ${SERIF}; white-space:nowrap; }
  .a m-btn { width:43px; margin-left:4px; font-weight:400; font-size:14px; flex:none; }
  .tx { width:103px; height:29px; margin:-1px 0 0 5px; ${SUNKEN} border-width:1px 2px 2px 2px; box-sizing:border-box; padding-left:3px; line-height:15px; flex:none; white-space:pre; overflow:hidden; font-size:14.500px; }
  .a .q { width:30px; margin-left:6px; flex:none; justify-content:flex-start; padding-left:1px; font:bold 21px/22px "Liberation Sans", sans-serif; }
  .q span { border:1px solid #111; padding:0 5px; }
  .b { display:flex; gap:6px; height:21px; margin-top:7px; flex:none; }
  .b m-btn { font:bold 14.500px ${SERIF}; flex:none; }
  .c { display:flex; height:32px; margin-top:3px; flex:none; align-items:stretch; }
  .run { width:29px; height:29px; margin:1px 5px 0 0; background:${TEAL}; ${RAISED} box-sizing:border-box; padding:1px; flex:none; }
  .run svg { display:block; width:23px; height:23px; background:#000; }
  .dt { width:163px; font:14.700px/14.500px ${MONO}; flex:none; white-space:pre; padding-top:2px; margin-left:-3px; text-align:center; }
  .zm { width:30px; height:29px; margin:2px 0 0 42px; background:${TEAL}; ${RAISED} box-sizing:border-box; flex:none; }
  .zm svg { display:block; width:26px; height:25px; }
  .s { width:20px; margin-left:2px; flex:none; font:bold 14px/32px "Liberation Sans", sans-serif; padding-left:3px; box-sizing:border-box; color:#700; }
  .d { height:20px; margin:3px 0 0 -3px; background:#fff8d0; font:15px/21px ${MONO}; padding-left:2px; white-space:pre; flex:none; border-left:1px solid #234; }
  .k { height:2px; background:#000; margin-left:-3px; }
`, a => {
  const run = (extra, bg) => `<div class="run"><svg viewBox="0 0 24 24">${bg || ''}${RUN}${extra || ''}</svg></div>`;
  const color = a('st', 'red') === 'green' ? '#14e014' : '#f01c1c';
  return `<div class="a"><div class="ck"><svg viewBox="0 0 11 11"><path d="M1 2l2 9 8-10-6 4-2 2z" fill="#c0104a"/></svg></div>
      <svg class="bd" viewBox="0 0 22 22">${BADGE[a('badge')]}</svg><div class="nm">${a('name')}</div>
      <m-btn>ERF:</m-btn><div class="tx">${a('erf')}</div><m-btn class="q"><span>?</span></m-btn></div>
    <div class="b"><m-btn style="width:111px">Parameters...</m-btn><m-btn style="width:114px">Ranges...</m-btn><m-btn style="width:112px">Online...</m-btn></div>
    <div class="c">${run()}${run('<path d="M12 22l9-9M14 19l5 2" stroke="#e01010" stroke-width="1.400"/>')}${run('', '<path d="M2 2h6l2 2 4 0 2-2h6v20H2z" fill="none" stroke="#e01010" stroke-width="1.400"/>')}
      <div class="dt">29 Mar 2022
10:34 AM - 0:00:${a('t')}</div>
      <div class="zm"><svg viewBox="0 0 26 25"><circle cx="10" cy="10" r="6.500" fill="none" stroke="#111" stroke-width="1.300"/><path d="M7 10h6M10 7v6" stroke="#111"/><path d="M15 15l7 6" stroke="#111" stroke-width="3.400"/></svg></div>
      <div class="s" style="background:${color}">!</div></div>
    <div class="d">${a('msg')}</div><div class="k"></div>`;
});

define('checklist-editor', `
  :host { display:flex; flex-direction:column; flex:1; min-width:0; box-sizing:border-box; margin-left:7px; background:#173; padding:1px 0 0 1px; font:bold 15px ${SERIF}; color:#111; overflow:hidden; }
  .mb { display:flex; height:33px; background:${CYAN}; flex:none; }
  .mn { width:136px; ${RAISED} border-color:#cff3f3 #204a4a #204a4a #cff3f3; box-sizing:border-box; display:flex; align-items:center; padding-left:12px; gap:16px; }
  .mn u { text-underline-offset:3px; }
  .fp { height:19px; margin-top:2px; background:${CYAN}; border:1px solid #000; box-sizing:border-box; text-align:center; width:380px; line-height:17px; flex:none; }
  .sp { height:3px; background:#1d6a5a; flex:none; }
`, () => `<div class="mb"><div class="mn"><span><u>F</u>ile</span><span><u>E</u>dit</span><span><u>R</u>un</span></div></div>
  <div class="fp">fp-qae</div><div class="sp"></div>
  <check-item badge="drill" name="Board-Drill Che" erf="Std (Mils)" t="01" msg="3 layers processed"></check-item>
  <check-item badge="signal" name="Signal Layer Ch" erf="signal (Mi" t="17" msg="4 layers were processed"></check-item>
  <check-item badge="power" name="Power/Ground C" erf="P/G (Mils)" t="01" st="green" msg="No power/ground layers processed"></check-item>
  <check-item badge="mask" name="Solder Mask Ch" erf="Soldermask" t="07" msg="2 Solder Mask layers were processed"></check-item>
  <check-item badge="silk" name="Silk Screen Che" erf="Silkscreen" t="03" msg="4 layers processed"></check-item>`);

define('ge-app', `
  :host { display:flex; flex-direction:column; position:relative; width:1916px; height:957px; overflow:hidden; background:#2f5c8a; }
  .body { flex:1; min-height:0; display:flex; }
`, () => `<ge-title></ge-title><ge-menubar></ge-menubar>
  <div class="body"><ge-left></ge-left><pcb-canvas></pcb-canvas><ge-toolbar></ge-toolbar></div>
  <ge-window name="Results viewer" x="right:6px;width:47px" xt="X" style="left:64px;top:361px;width:510px;height:596px;background:linear-gradient(90deg,#8fb8c4 0,#c8f4f8 3px,#7fd8dc 8px,transparent 8px),linear-gradient(180deg,#d02028 0 114px,#000 114px 122px,#d02028 122px 205px,#000 205px 214px,#d02028 214px 262px,#000 262px 319px,#d02028 319px 357px,#000 357px 384px,#d02028 384px 471px,#000 471px 532px,#d02028 532px 570px,#000 570px)"
    glass="radial-gradient(ellipse 45px 16px at 181px 30px,#000 70%,transparent 100%),linear-gradient(90deg,#a8d8dc 0,#a8d8dc 88px,#e01818 100px,#d81820 360px,#d84040 500px)"><results-viewer></results-viewer></ge-window>
  <ge-window name="Results histogram" style="left:1337px;top:361px;width:240px;height:574px;background:#c02028"
    glass="linear-gradient(90deg,#e8c0c0 0,#c82020 110px,#c82020 176px,#000 190px,#fff 204px)"><results-histogram></results-histogram></ge-window>
  <ge-window name="Checklist Editor" bar="30" x="right:-6px;width:16px;border-color:#bbb" style="left:1560px;top:291px;width:356px;height:666px;background:linear-gradient(90deg,#b04040,#bff0f8 3px,#a8dce4 7px)"
    glass="linear-gradient(90deg,#e84040 0,#fff 16px)"><checklist-editor></checklist-editor></ge-window>`);
</script>
</body>
</html>
